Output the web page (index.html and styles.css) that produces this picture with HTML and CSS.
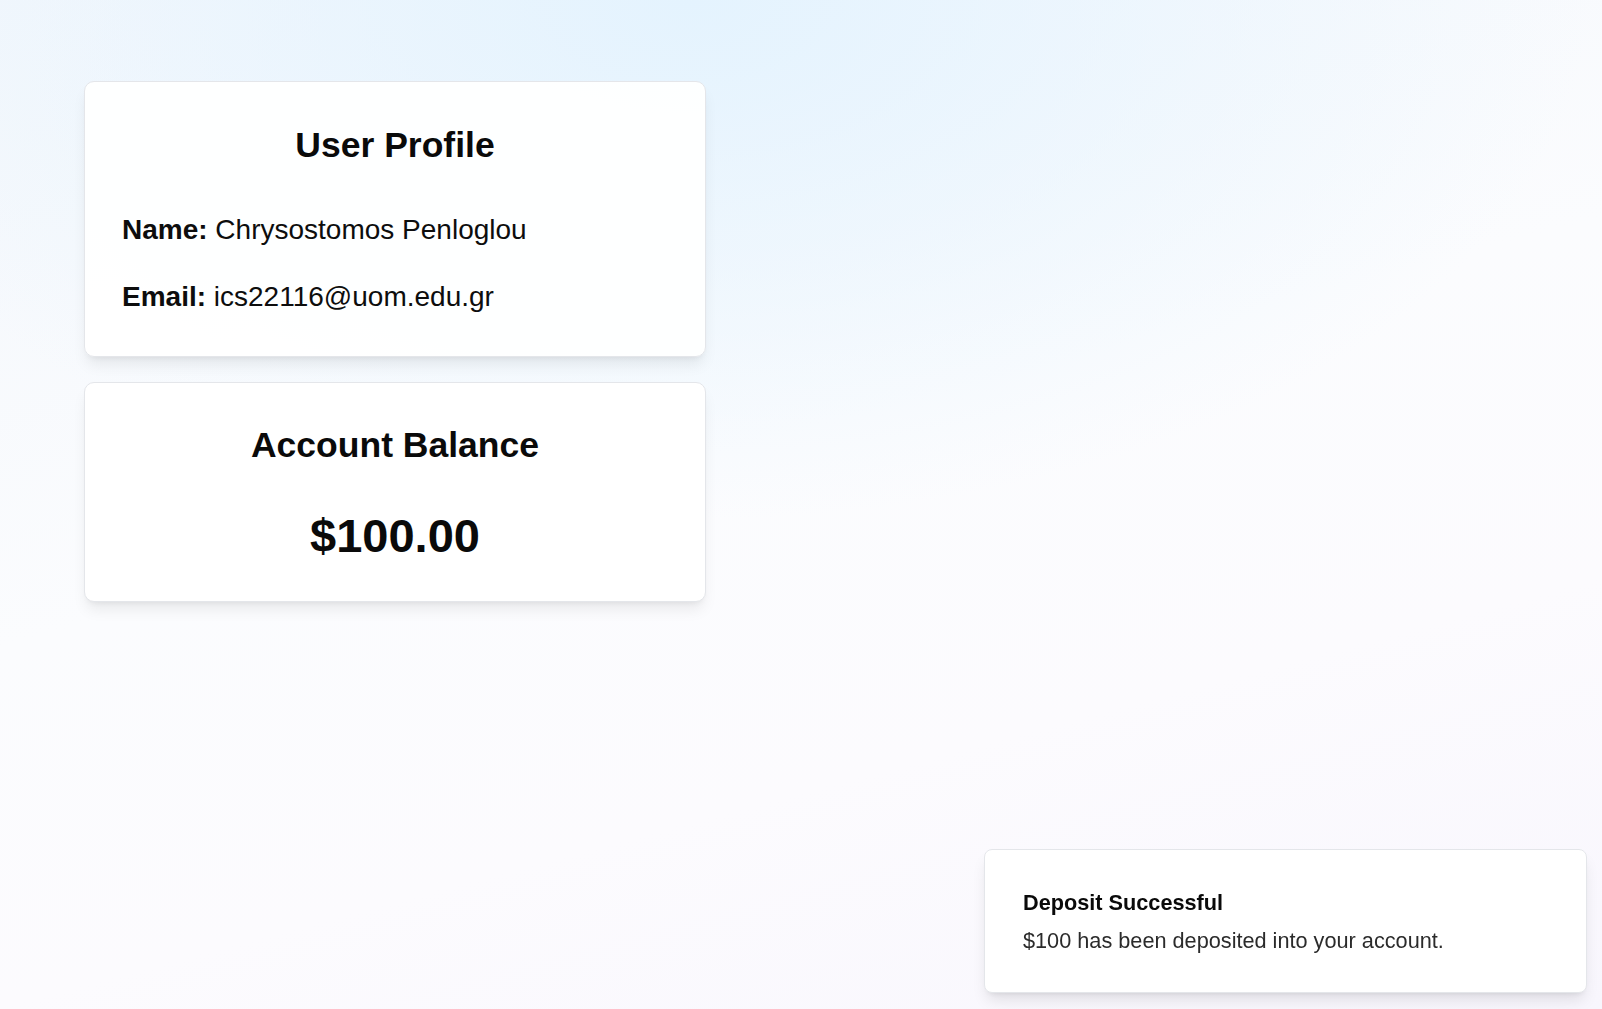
FILE: index.html
```html
<!DOCTYPE html>
<html lang="en">
<head>
<meta charset="utf-8">
<title>Profile</title>
<link rel="stylesheet" href="styles.css">
</head>
<body>
<main class="page">
  <section class="card profile">
    <h2 class="card-title">User Profile</h2>
    <p class="info"><strong>Name:</strong> Chrysostomos Penloglou</p>
    <p class="info"><strong>Email:</strong> ics22116@uom.edu.gr</p>
  </section>
  <section class="card balance">
    <h2 class="card-title">Account Balance</h2>
    <p class="amount">$100.00</p>
  </section>
</main>
<div class="toast" role="status">
  <div class="toast-title">Deposit Successful</div>
  <div class="toast-desc">$100 has been deposited into your account.</div>
</div>
</body>
</html>
```
FILE: styles.css
```css
* { box-sizing: border-box; }
html, body { height: 100%; }
body {
  margin: 0;
  font-family: "Liberation Sans", Arial, sans-serif;
  color: #0a0a0a;
  background:
    radial-gradient(ellipse 900px 520px at 43% 0%, rgba(228, 243, 254, 1) 0%, rgba(228, 243, 254, 0) 100%),
    linear-gradient(165deg, #f3f7fc 0%, #fbfcfe 45%, #fcfbfe 70%, #f8f6fd 100%);
  overflow: hidden;
}
.page {
  display: flex;
  flex-direction: column;
  gap: 25px;
  width: 622px;
  margin-left: 84px;
  padding-top: 81px;
}
.card {
  background: rgba(255, 255, 255, 0.92);
  border: 1px solid #e4e6ea;
  border-radius: 10px;
  box-shadow: 0 10px 15px -3px rgba(0, 0, 0, 0.08), 0 4px 6px -4px rgba(0, 0, 0, 0.08);
}
.profile { padding: 42px 37px 43px; }
.balance { padding: 41px 37px 38px; background: #fff; }
.card-title {
  margin: 0;
  font-size: 35.5px;
  line-height: 42px;
  font-weight: 700;
  text-align: center;
}
.profile .card-title { margin-bottom: 48px; }
.info {
  margin: 0;
  font-size: 28px;
  line-height: 32px;
  color: #0d0d0d;
}
.info + .info { margin-top: 35px; }
.info strong { font-weight: 700; }
.amount {
  margin: 43px 0 0;
  font-size: 47px;
  line-height: 54px;
  font-weight: 700;
  text-align: center;
}
.toast {
  position: fixed;
  right: 15px;
  bottom: 16px;
  width: 603px;
  padding: 39px 37px 37px 38px;
  background: #fff;
  border: 1px solid #e4e6ea;
  border-radius: 8px;
  box-shadow: 0 10px 15px -3px rgba(0, 0, 0, 0.1), 0 4px 6px -4px rgba(0, 0, 0, 0.1);
}
.toast-title {
  font-size: 21.7px;
  line-height: 28px;
  font-weight: 700;
  color: #0a0a0a;
}
.toast-desc {
  margin-top: 10px;
  font-size: 21.7px;
  line-height: 28px;
  color: #2b2b2b;
}
```
